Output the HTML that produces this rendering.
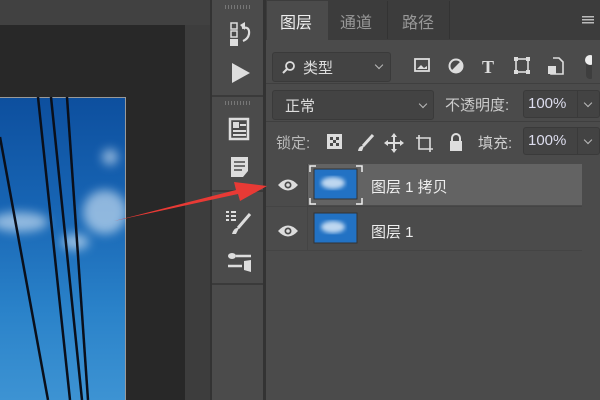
<!DOCTYPE html>
<html><head><meta charset="utf-8"><style>
*{margin:0;padding:0;box-sizing:border-box}
body{width:600px;height:400px;overflow:hidden;background:#4b4b4b;position:relative;font-family:"Liberation Sans","Noto Sans CJK SC",sans-serif;color:#ddd}
.a{position:absolute}
.box{position:absolute;background:#434343;border:1px solid #3a3a3a;border-radius:3px}
.t{position:absolute;font-size:15px;color:#ddd;white-space:nowrap}
.chev{position:absolute;width:6px;height:6px;border-right:1.5px solid #bbb;border-bottom:1.5px solid #bbb;transform:rotate(45deg)}
</style></head><body>
<div class="a" style="left:0;top:0;width:210px;height:25px;background:#414141"></div>
<div class="a" style="left:0;top:25px;width:185px;height:375px;background:#282828"></div>
<div class="a" style="left:185px;top:25px;width:25px;height:375px;background:#3d3d3d"></div>
<div class="a" style="left:0;top:97px;width:126px;height:303px;background:linear-gradient(180deg,#0d4f9e 0%,#1764b3 35%,#2a82c9 70%,#3d93d3 100%);border-right:1px solid #999;border-top:1px solid #999"></div>
<svg class="a" style="left:0;top:97px" width="126" height="303">
<defs><filter id="b"><feGaussianBlur stdDeviation="5"/></filter></defs>
<g fill="#dfeefa" opacity=".6" filter="url(#b)"><ellipse cx="105" cy="115" rx="22" ry="22"/><ellipse cx="20" cy="125" rx="28" ry="10"/><ellipse cx="75" cy="145" rx="14" ry="8"/><ellipse cx="110" cy="60" rx="8" ry="8"/></g>
<g stroke="#0a0f1a" stroke-width="2.5" fill="none"><path d="M38 0 L70 303"/><path d="M51 0 L82 303"/><path d="M67 0 L88 303"/><path d="M0 40 L48 303"/></g></svg>
<div class="a" style="left:210px;top:0;width:56px;height:400px;background:#333"></div>
<div class="a" style="left:212px;top:0;width:51px;height:400px;background:#4b4b4b"></div>
<div class="a" style="left:212px;top:95px;width:51px;height:2px;background:#3a3a3a"></div>
<div class="a" style="left:212px;top:190px;width:51px;height:2px;background:#3a3a3a"></div>
<div class="a" style="left:212px;top:283px;width:51px;height:2px;background:#3a3a3a"></div>
<div class="a" style="left:225px;top:5px;width:25px;height:4px;background:repeating-linear-gradient(90deg,#777 0 1px,transparent 1px 3px)"></div>
<div class="a" style="left:225px;top:101px;width:25px;height:4px;background:repeating-linear-gradient(90deg,#777 0 1px,transparent 1px 3px)"></div>
<svg class="a" style="left:228px;top:20px" width="26" height="28"><rect x="3" y="3" width="6" height="6" fill="none" stroke="#ddd" stroke-width="1.5"/><rect x="3" y="11" width="6" height="6" fill="none" stroke="#ddd" stroke-width="1.5"/><rect x="2" y="19" width="8" height="7" fill="#ddd"/><path d="M14 8 Q22 6 21 14 Q20 19 15 21" fill="none" stroke="#ddd" stroke-width="2.2"/><path d="M12 5l5-3v8Z" fill="#ddd"/></svg>
<svg class="a" style="left:228px;top:60px" width="24" height="26"><path d="M4 3 L22 13 L4 23Z" fill="#ddd"/></svg>
<svg class="a" style="left:228px;top:117px" width="22" height="24"><rect x="2" y="2" width="18" height="20" fill="none" stroke="#ddd" stroke-width="2.5"/><rect x="5" y="5" width="6" height="6" fill="#ddd"/><path d="M12 8h6M5 14h13M5 18h13" stroke="#ddd" stroke-width="2"/></svg>
<svg class="a" style="left:229px;top:155px" width="22" height="24"><path d="M2 2h17v14l-5 6H2Z" fill="#ddd"/><path d="M5 7h11M5 11h11M5 15h8" stroke="#4b4b4b" stroke-width="1.5"/></svg>
<svg class="a" style="left:224px;top:210px" width="30" height="28"><path d="M2 2h3M2 6h3M2 10h3M7 2h5M7 6h5M7 10h5" stroke="#ddd" stroke-width="2"/><path d="M26 4 L14 18" stroke="#ddd" stroke-width="3"/><path d="M8 24 Q10 17 15 18 L12 24Z" fill="#ddd"/></svg>
<svg class="a" style="left:224px;top:250px" width="30" height="26"><ellipse cx="8" cy="6" rx="4" ry="3" fill="#ddd"/><path d="M12 6h15M4 16h14" stroke="#ddd" stroke-width="2.5"/><path d="M20 11 L27 10 L27 22 L20 20Z" fill="#ddd"/></svg>
<div class="a" style="left:266px;top:0;width:334px;height:40px;background:#3c3c3c"></div>
<div class="a" style="left:267px;top:1px;width:61px;height:39px;background:#4b4b4b"></div>
<div class="a" style="left:328px;top:1px;width:60px;height:38px;border-right:1px solid #333"></div>
<div class="a" style="left:388px;top:1px;width:62px;height:38px;border-right:1px solid #333"></div>
<div class="t" style="left:280px;top:9px;font-size:16px;color:#eee">图层</div>
<div class="t" style="left:340px;top:9px;font-size:16px;color:#999">通道</div>
<div class="t" style="left:402px;top:9px;font-size:16px;color:#999">路径</div>
<div class="a" style="left:582px;top:16px;width:12px;height:8px;background:repeating-linear-gradient(180deg,#bbb 0 1.5px,transparent 1.5px 3px)"></div>
<div class="a" style="left:266px;top:83px;width:334px;height:1px;background:#3f3f3f"></div>
<div class="a" style="left:266px;top:121px;width:334px;height:1px;background:#3f3f3f"></div>
<div class="box" style="left:272px;top:52px;width:119px;height:30px"></div>
<svg class="a" style="left:282px;top:60px" width="14" height="14"><circle cx="8" cy="6" r="4" fill="none" stroke="#ddd" stroke-width="1.8"/><path d="M5 9L1 13" stroke="#ddd" stroke-width="2"/></svg>
<div class="t" style="left:303px;top:57px">类型</div>
<div class="chev" style="left:376px;top:62px"></div>
<svg class="a" style="left:412px;top:55px" width="180" height="24"><rect x="3" y="4" width="14" height="12" fill="none" stroke="#ddd" stroke-width="1.8"/><path d="M5 14l4-4 3 3 3-2v3Z" fill="#ddd"/><circle cx="44" cy="11" r="6.5" fill="none" stroke="#ddd" stroke-width="2"/><path d="M44 4a7 7 0 0 1 0 14Z" transform="rotate(45 44 11)" fill="#ddd"/><text x="70" y="18" font-family="Liberation Serif" font-weight="bold" font-size="18" fill="#ddd">T</text><rect x="104" y="4" width="12" height="13" fill="none" stroke="#ddd" stroke-width="1.6"/><g fill="#ddd"><rect x="102" y="2" width="4" height="4"/><rect x="114" y="2" width="4" height="4"/><rect x="102" y="15" width="4" height="4"/><rect x="114" y="15" width="4" height="4"/></g><path d="M141 3h6l4 4v12h-12v-8" fill="none" stroke="#ddd" stroke-width="1.6"/><rect x="136" y="11" width="8" height="8" fill="#ddd"/><rect x="174" y="0" width="8" height="24" rx="4" fill="#3e3e3e"/><circle cx="178" cy="5" r="5" fill="#eee"/></svg>
<div class="box" style="left:272px;top:90px;width:162px;height:30px"></div>
<div class="t" style="left:285px;top:95px">正常</div>
<div class="chev" style="left:420px;top:101px"></div>
<div class="t" style="left:445px;top:94px;color:#ccc">不透明度:</div>
<div class="box" style="left:523px;top:90px;width:77px;height:28px"></div>
<div class="a" style="left:577px;top:90px;width:1px;height:28px;background:#3a3a3a"></div>
<div class="t" style="left:528px;top:95px;color:#dde">100%</div>
<div class="chev" style="left:585px;top:100px"></div>
<div class="t" style="left:276px;top:132px;color:#bbb">锁定:</div>
<svg class="a" style="left:326px;top:133px" width="150" height="20"><rect x="1" y="1" width="15" height="15" fill="#ddd"/><g fill="#4b4b4b"><rect x="4" y="4" width="3" height="3"/><rect x="10" y="4" width="3" height="3"/><rect x="7" y="7" width="3" height="3"/><rect x="4" y="10" width="3" height="3"/><rect x="10" y="10" width="3" height="3"/></g><path d="M47 2L37 13" stroke="#ddd" stroke-width="3"/><path d="M32 18q1-6 6-5l-2 5Z" fill="#ddd"/><path d="M68 2v16M60 10h16" stroke="#ddd" stroke-width="2"/><path d="M68 0l-3 4h6ZM68 20l-3-4h6ZM58 10l4-3v6ZM78 10l-4-3v6Z" fill="#ddd"/><path d="M93 2v14h14M90 5h14v14" fill="none" stroke="#ddd" stroke-width="1.6"/><rect x="124" y="8" width="12" height="10" fill="#ddd"/><path d="M126 8v-3a4 4 0 0 1 8 0v3" fill="none" stroke="#ddd" stroke-width="2"/></svg>
<div class="t" style="left:478px;top:132px;color:#ccc">填充:</div>
<div class="box" style="left:523px;top:127px;width:77px;height:28px"></div>
<div class="a" style="left:577px;top:127px;width:1px;height:28px;background:#3a3a3a"></div>
<div class="t" style="left:528px;top:132px;color:#dde">100%</div>
<div class="chev" style="left:585px;top:137px"></div>
<div class="a" style="left:266px;top:163px;width:316px;height:88px;background:#4b4b4b"></div>
<div class="a" style="left:308px;top:164px;width:274px;height:41px;background:#636363"></div>
<div class="a" style="left:266px;top:206px;width:316px;height:1px;background:#444"></div>
<div class="a" style="left:266px;top:250px;width:316px;height:1px;background:#444"></div>
<div class="a" style="left:307px;top:164px;width:1px;height:86px;background:#444"></div>
<svg class="a" style="left:277px;top:178px" width="22" height="14"><path d="M1 7q10-11 20 0q-10 11-20 0Z" fill="#ddd"/><circle cx="11" cy="7" r="3.5" fill="#4b4b4b"/><circle cx="11" cy="7" r="1.8" fill="#ddd"/></svg>
<svg class="a" style="left:277px;top:224px" width="22" height="14"><path d="M1 7q10-11 20 0q-10 11-20 0Z" fill="#ddd"/><circle cx="11" cy="7" r="3.5" fill="#4b4b4b"/><circle cx="11" cy="7" r="1.8" fill="#ddd"/></svg>
<svg class="a" style="left:308px;top:164px" width="56" height="42"><defs><filter id="c"><feGaussianBlur stdDeviation="2"/></filter></defs><path d="M2 8V2h6M48 2h6v6M2 34v6h6M48 40h6v-6" stroke="#eee" stroke-width="1.5" fill="none"/><rect x="6" y="5" width="43" height="30" fill="#2272c4" stroke="#333"/><ellipse cx="25" cy="19" rx="12" ry="6" fill="#e6f1fb" opacity=".8" filter="url(#c)"/></svg>
<svg class="a" style="left:312px;top:212px" width="48" height="34"><defs><filter id="d"><feGaussianBlur stdDeviation="2"/></filter></defs><rect x="2" y="1" width="43" height="30" fill="#2272c4" stroke="#333"/><ellipse cx="21" cy="15" rx="12" ry="6" fill="#e6f1fb" opacity=".8" filter="url(#d)"/></svg>
<div class="t" style="left:371px;top:176px;color:#eee">图层 1 拷贝</div>
<div class="t" style="left:371px;top:221px;color:#eee">图层 1</div>
<svg class="a" style="left:0;top:0" width="600" height="400"><path d="M114 221 L236 190 L234 182 L267 186 L240 201 L238 194 Z" fill="#e83a35"/></svg>
</body></html>
